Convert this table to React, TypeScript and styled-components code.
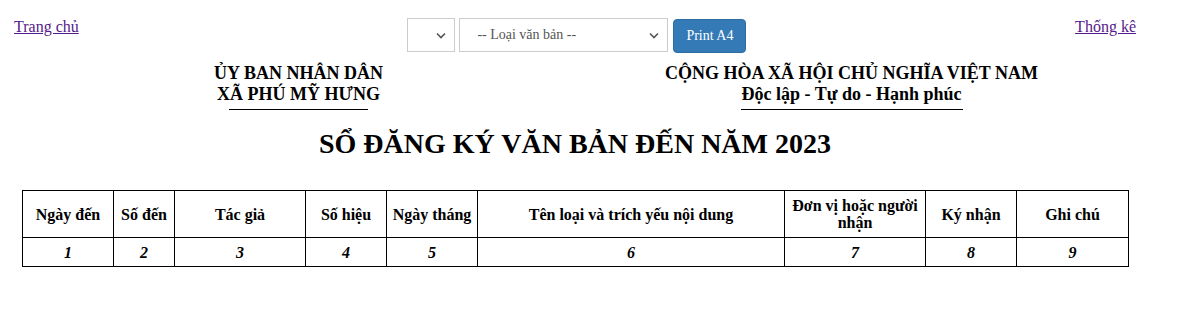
import styled, { createGlobalStyle } from 'styled-components';

const GlobalStyle = createGlobalStyle`
  html, body { margin: 0; padding: 0; background: #fff; }
  body { font-family: "Liberation Serif", "Times New Roman", serif; color: #000; }
`;

const Page = styled.div`
  width: 1122px;
  padding: 17px 0 0 14px;
`;

const TopBar = styled.div`
  display: flex; align-items: flex-start; justify-content: space-between;
`;
const NavLink = styled.a`
  font-size: 16px; line-height: 18px; color: #551a8b; text-decoration: underline;
  margin-top: 1px;
`;
const Controls = styled.div`
  display: flex; gap: 4px; margin-top: 1px;
`;
const SelectWrap = styled.div<{ $w: number }>`
  position: relative; width: ${(p) => p.$w}px; height: 34px;
  box-sizing: border-box; border: 1px solid #ccc; background: #fff;
  display: flex; align-items: center; padding-left: 17px;
  font-size: 14px; color: #555;
`;
const Chevron = styled.svg`
  position: absolute; right: 8px; top: 13px; width: 10px; height: 7px;
`;
const PrintButton = styled.button`
  height: 34px; margin: 1px 0 0 1px; padding: 0 12px;
  background: #337ab7; border: 1px solid #2e6da4; border-radius: 4px;
  color: #fff; font-family: inherit; font-size: 14px;
`;

const Content = styled.div`
  padding: 0 8px;
`;
const Header = styled.div`
  display: grid; grid-template-columns: 1fr 1fr; margin-top: 10px;
`;
const HeaderCol = styled.div`
  display: flex; flex-direction: column; align-items: center;
  font-weight: bold; font-size: 18px; line-height: 21px;
`;
const Rule = styled.div<{ $w: number }>`
  width: ${(p) => p.$w}px; height: 1px; background: #000; margin-top: 4px;
`;
const Title = styled.h1`
  margin: 17px 0 0; text-align: center; font-size: 28px; line-height: 34px; font-weight: bold;
`;

const Table = styled.table`
  margin-top: 29px; width: 1106px; border-collapse: collapse; table-layout: fixed;
`;
const Th = styled.th`
  border: 1px solid #000; padding: 0 2px; height: 46px;
  font-size: 16px; line-height: 17px; font-weight: bold; text-align: center; vertical-align: middle;
`;
const Td = styled.td`
  border: 1px solid #000; padding: 0 2px; height: 28px;
  font-size: 16px; line-height: 19px; font-weight: bold; font-style: italic; text-align: center;
`;

const COLUMNS: [string, number][] = [
  ['Ngày đến', 91], ['Số đến', 61], ['Tác giả', 131], ['Số hiệu', 81], ['Ngày tháng', 91],
  ['Tên loại và trích yếu nội dung', 307], ['Đơn vị hoặc người nhận', 141], ['Ký nhận', 91], ['Ghi chú', 112],
];

function ChevronIcon() {
  return (
    <Chevron viewBox="0 0 10 7">
      <path d="M1 1.5 L5 5.5 L9 1.5" fill="none" stroke="#555" strokeWidth="1.6" />
    </Chevron>
  );
}

export default function App() {
  return (
    <>
      <GlobalStyle />
      <Page>
        <TopBar>
          <NavLink href="#">Trang chủ</NavLink>
          <Controls>
            <SelectWrap $w={48}><ChevronIcon /></SelectWrap>
            <SelectWrap $w={209}>-- Loại văn bản --<ChevronIcon /></SelectWrap>
            <PrintButton>Print A4</PrintButton>
          </Controls>
          <NavLink href="#">Thống kê</NavLink>
        </TopBar>
        <Content>
          <Header>
            <HeaderCol>
              <span>ỦY BAN NHÂN DÂN</span>
              <span>XÃ PHÚ MỸ HƯNG</span>
              <Rule $w={139} />
            </HeaderCol>
            <HeaderCol>
              <span>CỘNG HÒA XÃ HỘI CHỦ NGHĨA VIỆT NAM</span>
              <span>Độc lập - Tự do - Hạnh phúc</span>
              <Rule $w={222} />
            </HeaderCol>
          </Header>
          <Title>SỔ ĐĂNG KÝ VĂN BẢN ĐẾN NĂM 2023</Title>
          <Table>
            <colgroup>
              {COLUMNS.map(([name, w]) => <col key={name} style={{ width: w }} />)}
            </colgroup>
            <thead>
              <tr>{COLUMNS.map(([name]) => <Th key={name}>{name}</Th>)}</tr>
            </thead>
            <tbody>
              <tr>{COLUMNS.map(([name], i) => <Td key={name}>{i + 1}</Td>)}</tr>
            </tbody>
          </Table>
        </Content>
      </Page>
    </>
  );
}
